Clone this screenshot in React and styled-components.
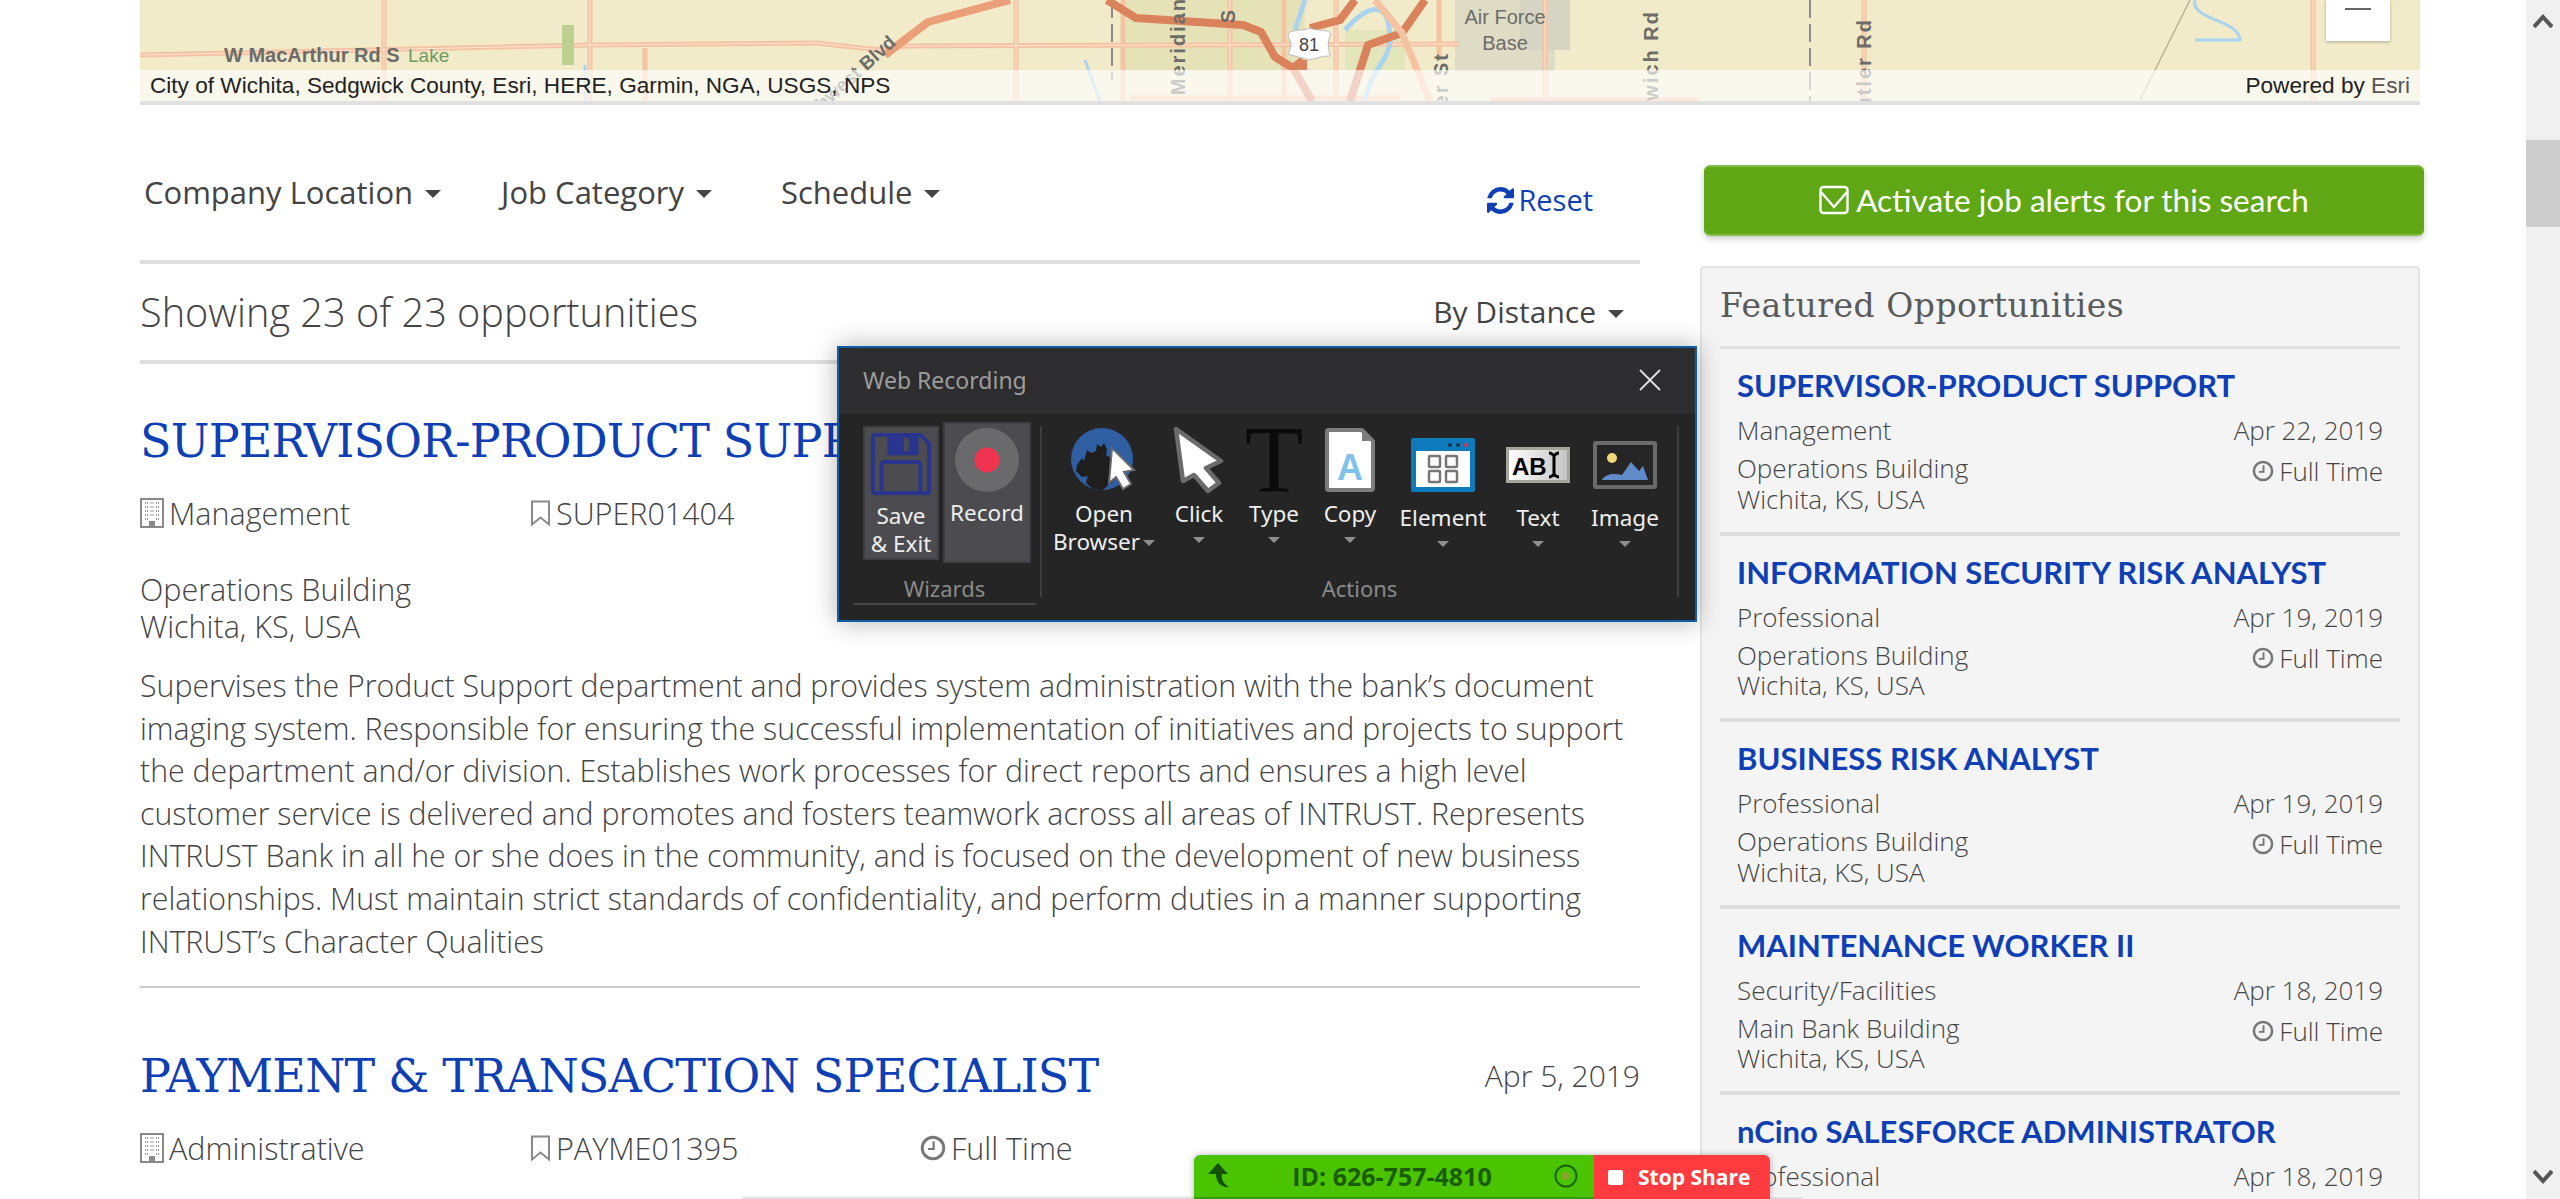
import React from "react";
import styled, { createGlobalStyle } from "styled-components";

const Global = createGlobalStyle`
  html, body { margin: 0; padding: 0; background: #fff; overflow: hidden; }
  * { box-sizing: border-box; }
`;
const BLUE = "#0f3fb5";
const TXT = "#444444";
const BODY = `"Open Sans", "Lato", sans-serif`;
const SLAB = `"DejaVu Serif", "Liberation Serif", serif`;

const Page = styled.div`
  display: flex; width: 2560px; height: 1199px; overflow: hidden; position: relative;
  font-family: ${BODY}; color: ${TXT}; font-weight: 300;
`;
const Main = styled.main`flex: 1; padding: 0 106px 0 140px; min-width: 0; overflow: hidden;`;
const Scrollbar = styled.aside`
  width: 34px; background: #f0f0f0; display: flex; flex-direction: column; align-items: center;
  padding-top: 14px;
`;
const Thumb = styled.div`width: 34px; height: 87px; background: #cdcdcd; margin-top: 112px;`;
const ScrollArrowDown = styled.svg`margin-top: auto; margin-bottom: 15px;`;

const MapBox = styled.div`
  height: 105px; border-bottom: 4px solid #e0e0e0; position: relative; overflow: hidden; background: #f0eac8;
`;
const MapSvg = styled.svg`display: block; width: 100%; height: 101px;`;
const Attribution = styled.div`
  position: absolute; left: 0; right: 0; bottom: 0; height: 31px; padding: 0 10px 0 10px;
  background: rgba(255,255,255,.65); display: flex; justify-content: space-between; align-items: center;
  font: 400 22.6px "Liberation Sans", sans-serif; color: #222;
`;
const EsriLink = styled.span`color: #555;`;
const ZoomBtn = styled.div`
  position: absolute; top: 0; right: 30px; width: 64px; height: 41px; background: #fff;
  box-shadow: 0 1px 3px rgba(0,0,0,.3); display: flex; justify-content: center; padding-top: 8px;
`;
const ZoomMinus = styled.i`width: 26px; height: 2px; background: #666;`;

const Columns = styled.div`display: flex; gap: 64px;`;
const Left = styled.section`width: 1500px; flex: none;`;
const Right = styled.section`width: 724px; flex: none; padding-top: 60px;`;

const FilterBar = styled.div`
  height: 159px; border-bottom: 4px solid #e0e0e0; display: flex; align-items: flex-start; padding: 66px 47px 0 4px;
`;
const Filter = styled.button`
  border: 0; background: none; padding: 0; font: 400 ${p => p.$size || 31}px/42px ${BODY}; color: ${TXT};
  margin-right: ${p => p.$gap || 0}px; display: inline-flex; align-items: center;
`;
const Caret = styled.i`
  display: inline-block; width: 0; height: 0; margin-left: 12px; margin-top: 4px;
  border-left: 8px solid transparent; border-right: 8px solid transparent; border-top: 8px solid ${TXT};
`;
const Reset = styled.a`
  margin-left: auto; margin-top: 8px; display: inline-flex; align-items: center; gap: 4px; color: ${BLUE};
  font: 400 29px/42px ${BODY};
`;
const ResultsHead = styled.div`
  height: 100px; border-bottom: 4px solid #e0e0e0; display: flex; justify-content: space-between;
  align-items: center; padding: 0 16px 0 0; margin-top: 0;
`;
const Showing = styled.h2`margin: 0; font: 300 39.7px/44px ${BODY}; color: ${TXT};`;

const Job = styled.article`
  padding-top: 47px; & + & { margin-top: 11px; }
  &:first-of-type { padding-bottom: 23px; border-bottom: 2px solid #ccc; }
`;
const JobHead = styled.div`display: flex; justify-content: space-between; align-items: center;`;
const JobTitle = styled.h3`
  margin: 0; font: 400 46px/60px ${SLAB}; color: ${BLUE}; white-space: nowrap; letter-spacing: -0.8px;
`;
const JobDate = styled.span`font: 300 30px/60px ${BODY};`;
const Meta = styled.div`display: flex; margin-top: 22px; height: 40px; align-items: center;`;
const MetaItem = styled.span`width: 390px; display: inline-flex; align-items: center; gap: 5px; font: 300 30.5px/40px ${BODY}; white-space: nowrap;`;
const Location = styled.div`margin-top: 38px; font: 300 30.5px/37px ${BODY};`;
const Line = styled.span`display: block; white-space: nowrap;`;
const Desc = styled.p`margin: 20px 0 0; font: 300 30.3px/42.6px ${BODY};`;

const AlertBtn = styled.button`
  width: 720px; height: 71px; margin-left: 0; border: 0; border-radius: 6px; background: #5fa714;
  border-top: 2px solid #85bd4d; border-bottom: 2px solid #85bd4d;
  box-shadow: 0 3px 6px rgba(0,0,0,.2); color: #fff; font: 400 31.5px "Lato", sans-serif;
  display: flex; align-items: center; justify-content: center; gap: 7px; padding-bottom: 2px;
`;
const Panel = styled.div`
  width: 720px; margin: 30px 0 0 -4px; background: #f4f4f4; border: 2px solid #e4e4e4; border-radius: 4px;
  padding: 0 18px; height: 1000px;
`;
const PanelTitle = styled.h2`
  margin: 0; height: 81px; display: flex; align-items: center; padding-bottom: 4px; border-bottom: 3px solid #e0e0e0;
  font: 400 33px ${SLAB}; color: #5a5a5a; letter-spacing: .5px;
`;
const Item = styled.div`
  height: 186.5px; padding: 20px 17px 0; border-bottom: 4px solid #ddd;
`;
const ItemTitle = styled.a`display: block; font: 700 31px/32px "Lato", sans-serif; color: ${BLUE}; white-space: nowrap;`;
const ItemRow = styled.div`display: flex; justify-content: space-between; align-items: ${p => p.$top ? "flex-start" : "center"}; font: 300 26px/32px ${BODY}; margin-top: ${p => p.$mt}px;`;
const ItemPlace = styled.div`font: 300 26px/30.5px ${BODY};`;
const ItemTime = styled.span`display: inline-flex; align-items: center; gap: 5px; margin-top: 2px;`;

const Recorder = styled.div`
  position: absolute; left: 837px; top: 346px; width: 860px; height: 276px; border: 2px solid #0e5ea8;
  background: #252526; box-shadow: 0 0 24px rgba(0,0,0,.3); color: #e8e8e8; font-family: "Noto Sans", sans-serif; font-weight: 400;
`;
const RecHead = styled.div`
  height: 66px; background: #2d2d30; display: flex; align-items: center; justify-content: space-between;
  padding: 0 34px 2px 24px; font-size: 23px; color: #9c9c9c;
`;
const Ribbon = styled.div`display: flex; height: 206px;`;
const Group = styled.div`width: ${p => p.$w}px; padding-top: ${p => p.$pt}px; display: flex; flex-direction: column;`;
const GroupRow = styled.div`display: flex; height: ${p => p.$h}px;`;
const GroupLabel = styled.div`
  margin: ${p => p.$mt}px ${p => p.$line ? 4 : 0}px 0 ${p => p.$line ? 14 : 0}px; text-align: center; font-size: 22px; line-height: 29px; color: #8a8a8a;
  height: 31px; border-bottom: ${p => p.$line ? "2px solid #454548" : "0"};
`;
const Sep = styled.i`width: 2px; height: 171px; margin-top: 12px; background: #3e3e42; flex: none;`;
const WizBtn = styled.div`
  width: ${p => p.$w}px; height: ${p => p.$h}px; margin: ${p => p.$mt}px 0 0 ${p => p.$ml}px; background: #4b4b50;
  border: 2px solid #3f3f43; display: flex; flex-direction: column; align-items: center; padding-top: ${p => p.$pt}px;
  font-size: 22.5px; line-height: 28px; text-align: center; color: #eee;
`;
const WizLabel = styled.span`margin-top: 6px;`;
const Tool = styled.div`
  width: ${p => p.$w}px; flex: none; display: flex; flex-direction: column; align-items: center;
  font-size: 22.5px; line-height: 28px; text-align: center; color: #eee;
`;
const IconSlot = styled.div`
  height: ${p => p.$low ? 78 : 68}px; display: flex; align-items: center; justify-content: center; margin-bottom: ${p => p.$low ? 0 : 6}px;
`;
const DropCaret = styled.i`
  display: inline-block; width: 0; height: 0; margin: ${p => p.$inline ? "0 0 4px 3px" : "9px 0 0"};
  border-left: 6.5px solid transparent; border-right: 6.5px solid transparent; border-top: 6.5px solid #8e8e8e;
`;
const BigT = styled.span`font: 400 96px/68px "Liberation Serif", serif; color: #0b0b0b;`;

const ShareBar = styled.div`
  position: absolute; left: 1194px; top: 1155px; width: 576px; height: 44px; display: flex; border-radius: 6px 6px 0 0;
  overflow: hidden; font: 700 21px "Open Sans", sans-serif; box-shadow: 0 0 6px rgba(0,0,0,.3);
`;
const ShareId = styled.div`
  width: 400px; background: #4bc400; border-bottom: 2px solid #3a9a00; color: #1a5c00; display: flex; align-items: center; padding: 0 16px 0 12px; justify-content: space-between;
  font-size: 25px;
`;
const ShareStop = styled.div`flex: 1; background: #ff3b3f; color: #fff; display: flex; align-items: center; gap: 15px; padding-left: 14px;`;
const StopSquare = styled.i`width: 15px; height: 15px; border-radius: 2px; background: #fff;`;
const WinShadow = styled.div`
  position: absolute; left: 742px; top: 1195px; width: 1060px; height: 4px; background: linear-gradient(#fff, #d8d8d8);
`;

const Building = () => (
  <svg width="24" height="30" viewBox="0 0 24 30">
    <rect x="1" y="1" width="22" height="28" fill="#fff" stroke="#8a8a8a" strokeWidth="2" />
    <path d="M5 5h3M10.5 5h3M16 5h3M5 9h3M10.5 9h3M16 9h3M5 13h3M10.5 13h3M16 13h3M5 17h3M10.5 17h3M16 17h3M5 21h3M16 21h3" stroke="#9a9a9a" strokeWidth="2" strokeDasharray="1 1" />
    <rect x="9" y="23" width="6" height="6" fill="#8a8a8a" />
  </svg>
);
const Bookmark = () => (
  <svg width="21" height="27" viewBox="0 0 21 27" fill="none" stroke="#8a8a8a" strokeWidth="2">
    <path d="M2 1.5h17v23l-8.5-7-8.5 7z" />
  </svg>
);
const Clock = ({ s = 26 }) => (
  <svg width={s} height={s} viewBox="0 0 21 21" fill="none" stroke="#777" strokeWidth="2.4">
    <circle cx="10.5" cy="10.5" r="8.7" />
    <path d="M11 5v6.3H6.5" strokeWidth="1.8" />
  </svg>
);
const Refresh = () => (
  <svg width="27" height="27" viewBox="0 0 1536 1536" fill={BLUE}>
    <path d="M1511 928q0 5-1 7-64 268-268 434.5T764 1536q-146 0-282.500-55T238 1324l-129 129q-19 19-45 19t-45-19-19-45V960q0-26 19-45t45-19h448q26 0 45 19t19 45-19 45l-137 137q71 66 161 102t187 36q134 0 250-65t186-179q11-17 53-117 8-23 30-23h192q13 0 22.500 9.500t9.500 22.500zm25-800v448q0 26-19 45t-45 19h-448q-26 0-45-19t-19-45 19-45l138-138Q969 256 768 256q-134 0-250 65T332 500q-11 17-53 117-8 23-30 23H50q-13 0-22.500-9.500T18 608v-7q65-268 270-434.500T768 0q146 0 284 55.500T1297 212l130-129q19-19 45-19t45 19 19 45z" />
  </svg>
);
const Envelope = () => (
  <svg width="30" height="30" viewBox="0 0 30 30" fill="none" stroke="#fff" strokeWidth="2.4">
    <rect x="1.500" y="2" width="27" height="26" rx="3" />
    <path d="M2 7l13 15L28 7" />
  </svg>
);

const Floppy = () => (
  <svg width="64" height="66" viewBox="0 0 64 66" fill="none" stroke="#29348f" strokeWidth="4">
    <path d="M3 5a2 2 0 0 1 2-2h47l9 9v49a2 2 0 0 1-2 2H5a2 2 0 0 1-2-2z" />
    <rect x="18" y="3" width="32" height="21" fill="#29348f" stroke="none" />
    <rect x="35" y="6" width="5" height="14" fill="#4b4b50" stroke="none" />
    <path d="M12 62V34a3 3 0 0 1 3-3h34a3 3 0 0 1 3 3v28" />
  </svg>
);
const RecDot = () => (
  <svg width="66" height="66" viewBox="0 0 66 66">
    <circle cx="33" cy="33" r="32" fill="#6a6a6c" />
    <circle cx="33" cy="33" r="12.500" fill="#f0344f" />
  </svg>
);
const Globe = () => (
  <svg width="66" height="66" viewBox="0 0 66 66">
    <circle cx="31" cy="32" r="31" fill="#2f5ea3" />
    <path d="M6 38l5-7 2 3 3-11 4 3 5-2 1-7 4 3 3-4 3 6-1 6 5 3 5 1 4 6v9l-9 9c-3 1-6 7-10 7-6 0-13-3-15-8l2-6-6 1-6-6z" fill="#1e1e1e" />
    <polygon points="41,21 63,43 53,45 60,57 52,62 45,50 38,56" fill="#fff" stroke="#6a6a6a" strokeWidth="2" />
  </svg>
);
const Cursor = () => (
  <svg width="52" height="68" viewBox="-3 -3 52 68">
    <polygon points="0,0 45,32 30,39 43,54 32,62 18,46 7,52" fill="#fff" stroke="#6b6b6b" strokeWidth="4.500" strokeLinejoin="round" />
  </svg>
);
const CopyDoc = () => (
  <svg width="50" height="64" viewBox="0 0 50 64">
    <path d="M2 4a2 2 0 0 1 2-2h33l11 11v47a2 2 0 0 1-2 2H4a2 2 0 0 1-2-2z" fill="#fff" stroke="#7c7c7c" strokeWidth="4" />
    <path d="M37 2l11 11H37z" fill="#7c7c7c" />
    <text x="25" y="52" textAnchor="middle" fontFamily="Liberation Sans" fontWeight="700" fontSize="36" fill="#7fc1ea">A</text>
  </svg>
);
const ElementIcon = () => (
  <svg width="64" height="54" viewBox="0 0 64 54">
    <rect width="64" height="54" rx="2" fill="#0f7bbd" />
    <rect x="5" y="13" width="54" height="36" fill="#fff" />
    <circle cx="39" cy="7" r="2" fill="#1c3550" /><circle cx="47" cy="7" r="2" fill="#1c3550" /><circle cx="55" cy="7" r="2" fill="#e5304a" />
    <g fill="none" stroke="#777" strokeWidth="2.500">
      <rect x="18" y="18" width="11" height="11" rx="1" /><rect x="35" y="18" width="11" height="11" rx="1" />
      <rect x="18" y="33" width="11" height="11" rx="1" /><rect x="35" y="33" width="11" height="11" rx="1" />
    </g>
  </svg>
);
const TextIcon = () => (
  <svg width="64" height="36" viewBox="0 0 64 36">
    <defs>
      <linearGradient id="abg" x1="0" x2="1"><stop offset="0" stopColor="#fff" /><stop offset="1" stopColor="#c4c4c4" /></linearGradient>
    </defs>
    <rect x="1.500" y="1.500" width="61" height="33" fill="url(#abg)" stroke="#a5a59c" strokeWidth="3" />
    <text x="6" y="28" fontFamily="Liberation Sans" fontWeight="700" fontSize="24" fill="#000">AB</text>
    <path d="M43 6c3 0 3 2 5 2s2-2 5-2M48 8v20M43 30c3 0 3-2 5-2s2 2 5 2" fill="none" stroke="#000" strokeWidth="3" />
  </svg>
);
const ImageIcon = () => (
  <svg width="64" height="48" viewBox="0 0 64 48">
    <rect x="2" y="2" width="60" height="44" rx="1" fill="#262626" stroke="#6b6b6b" strokeWidth="4" />
    <circle cx="19" cy="17" r="5" fill="#f1d97b" />
    <path d="M9 39c3-6 12-7 20-5l9-13 8 9 4-5 5 14z" fill="#5f8cc9" />
  </svg>
);

const ROAD = "#f6c3a2";
const HWY = "#d9825c";
const MapArt = () => (
  <MapSvg viewBox="140 0 2280 101" preserveAspectRatio="none">
    <rect x="140" y="0" width="2280" height="101" fill="#f1ebca" />
    <rect x="1125" y="0" width="180" height="70" fill="#e6e2b8" />
    <rect x="1345" y="30" width="60" height="40" fill="#e3e6ba" />
    <rect x="1455" y="0" width="100" height="72" fill="#dfdcc6" />
    <rect x="1520" y="0" width="50" height="50" fill="#d6d4c2" />
    <g fill="none" stroke={ROAD} strokeWidth="5">
      <path d="M140 55L592 45 816 43 880 50 905 46 1460 44" />
      <path d="M384 0V101M590 0V101M645 48V101M1016 0V101M1123 0V101M1230 0V101M1284 0V101M1336 0V101M1439 0V60M1545 0V101M1864 0V101M2313 0V101" />
      <path d="M1130 98H1400M1490 100H1700" />
    </g>
    <path d="M140 55L592 45 816 43 880 50 905 46 1460 44M384 0V101M590 0V101M1016 0V101M1230 0V101M1336 0V101M1545 0V101M1864 0V101M2313 0V101" fill="none" stroke="#fbe6d6" strokeWidth="1" />
    <g fill="none" stroke="#a9d3ee" strokeWidth="5">
      <path d="M1305 0L1295 30M1345 30C1370 2 1390 0 1390 40C1390 60 1370 70 1365 101" />
      <path d="M2195 0C2190 20 2240 20 2240 40H2195" strokeWidth="3" />
      <path d="M585 65V101M1085 60L1100 101" strokeWidth="3" />
    </g>
    <rect x="562" y="25" width="12" height="40" fill="#bcd08f" />
    <path d="M1112 0V80M1810 0V101" stroke="#8c8c8c" strokeWidth="2" strokeDasharray="18 6" fill="none" />
    <path d="M2190 0L2140 100" stroke="#b8b296" strokeWidth="1.500" fill="none" />
    <g fill="none" stroke={HWY} strokeLinejoin="round">
      <path d="M885 55L928 22 1010 0" stroke="#eb9f78" strokeWidth="8" />
      <path d="M1107 0L1136 18 1243 25 1261 32 1275 57 1293 68 1303 60" strokeWidth="8" />
      <path d="M1293 68L1312 101M1303 60V70" strokeWidth="8" />
      <path d="M1310 28L1340 20 1355 0" strokeWidth="8" />
      <path d="M1350 101L1368 45 1402 33 1425 0" strokeWidth="8" />
      <path d="M1375 0L1402 33 1430 101" stroke={ROAD} strokeWidth="7" />
    </g>
    <path d="M1288 36C1288 28 1302 32 1310 28C1318 32 1332 28 1330 36C1326 46 1330 52 1330 56C1322 56 1316 58 1310 60C1302 58 1294 56 1288 54C1292 46 1292 44 1288 36Z" fill="#fff" stroke="#bbb" />
    <text x="1309" y="51" textAnchor="middle" fontFamily="Liberation Sans" fontSize="18" fill="#444">81</text>
    <g fontFamily="Liberation Sans" fontSize="20" fill="#6c6c68">
      <text x="224" y="62" fontWeight="700">W MacArthur Rd S</text>
      <text x="408" y="62" fill="#6f9a60" fontSize="19">Lake</text>
      <text x="1505" y="24" textAnchor="middle">Air Force</text>
      <text x="1505" y="50" textAnchor="middle">Base</text>
      <text transform="translate(897 44) rotate(-42)" textAnchor="end" fontWeight="700" fontSize="19">Southwest Blvd</text>
      <text transform="translate(1185 -3) rotate(-90)" textAnchor="end" fontWeight="700" letterSpacing="2">S Meridian</text>
      <text transform="translate(1235 10) rotate(-90)" textAnchor="end" fontWeight="700">S</text>
      <text transform="translate(1448 52) rotate(-90)" textAnchor="end" fontWeight="700" letterSpacing="2">Oliver St</text>
      <text transform="translate(1658 10) rotate(-90)" textAnchor="end" fontWeight="700" letterSpacing="2">Greenwich Rd</text>
      <text transform="translate(1871 18) rotate(-90)" textAnchor="end" fontWeight="700" letterSpacing="2">Butler Rd</text>
    </g>
  </MapSvg>
);

const featured = [
  ["SUPERVISOR-PRODUCT SUPPORT", "Management", "Apr 22, 2019", "Operations Building"],
  ["INFORMATION SECURITY RISK ANALYST", "Professional", "Apr 19, 2019", "Operations Building"],
  ["BUSINESS RISK ANALYST", "Professional", "Apr 19, 2019", "Operations Building"],
  ["MAINTENANCE WORKER II", "Security/Facilities", "Apr 18, 2019", "Main Bank Building"],
  ["nCino SALESFORCE ADMINISTRATOR", "Professional", "Apr 18, 2019", "Operations Building"],
];
const descLines = [
  "Supervises the Product Support department and provides system administration with the bank’s document",
  "imaging system. Responsible for ensuring the successful implementation of initiatives and projects to support",
  "the department and/or division. Establishes work processes for direct reports and ensures a high level",
  "customer service is delivered and promotes and fosters teamwork across all areas of INTRUST. Represents",
  "INTRUST Bank in all he or she does in the community, and is focused on the development of new business",
  "relationships. Must maintain strict standards of confidentiality, and perform duties in a manner supporting",
  "INTRUST’s Character Qualities",
];
const tools = [
  { w: 124, icon: <Globe />, label: <>Open<br />Browser<DropCaret $inline /></> },
  { w: 66, icon: <Cursor />, label: "Click", caret: true },
  { w: 84, icon: <BigT>T</BigT>, label: "Type", caret: true },
  { w: 68, icon: <CopyDoc />, label: "Copy", caret: true },
  { w: 118, low: true, icon: <ElementIcon />, label: "Element", caret: true },
  { w: 72, low: true, icon: <TextIcon />, label: "Text", caret: true },
  { w: 102, low: true, icon: <ImageIcon />, label: "Image", caret: true },
];

export default function App() {
  return (
    <Page>
      <Global />
      <Main>
        <MapBox>
          <MapArt />
          <ZoomBtn><ZoomMinus /></ZoomBtn>
          <Attribution>
            <span>City of Wichita, Sedgwick County, Esri, HERE, Garmin, NGA, USGS, NPS</span>
            <span>Powered by <EsriLink>Esri</EsriLink></span>
          </Attribution>
        </MapBox>
        <Columns>
          <Left>
            <FilterBar>
              <Filter $gap={60}>Company Location<Caret /></Filter>
              <Filter $gap={69}>Job Category<Caret /></Filter>
              <Filter>Schedule<Caret /></Filter>
              <Reset><Refresh />Reset</Reset>
            </FilterBar>
            <ResultsHead>
              <Showing>Showing 23 of 23 opportunities</Showing>
              <Filter $size={30}>By Distance<Caret /></Filter>
            </ResultsHead>
            <Job>
              <JobHead><JobTitle>SUPERVISOR-PRODUCT SUPPORT</JobTitle></JobHead>
              <Meta>
                <MetaItem><Building />Management</MetaItem>
                <MetaItem><Bookmark />SUPER01404</MetaItem>
              </Meta>
              <Location><Line>Operations Building</Line><Line>Wichita, KS, USA</Line></Location>
              <Desc>{descLines.map(l => <Line key={l}>{l}</Line>)}</Desc>
            </Job>
            <Job>
              <JobHead><JobTitle>PAYMENT &amp; TRANSACTION SPECIALIST</JobTitle><JobDate>Apr 5, 2019</JobDate></JobHead>
              <Meta>
                <MetaItem><Building />Administrative</MetaItem>
                <MetaItem><Bookmark />PAYME01395</MetaItem>
                <MetaItem><Clock />Full Time</MetaItem>
              </Meta>
            </Job>
          </Left>
          <Right>
            <AlertBtn><Envelope />Activate job alerts for this search</AlertBtn>
            <Panel>
              <PanelTitle>Featured Opportunities</PanelTitle>
              {featured.map(([t, c, d, b]) => (
                <Item key={t}>
                  <ItemTitle>{t}</ItemTitle>
                  <ItemRow $mt={13}><span>{c}</span><span>{d}</span></ItemRow>
                  <ItemRow $mt={7} $top>
                    <ItemPlace><Line>{b}</Line><Line>Wichita, KS, USA</Line></ItemPlace>
                    <ItemTime><Clock s={22} />Full Time</ItemTime>
                  </ItemRow>
                </Item>
              ))}
            </Panel>
          </Right>
        </Columns>
      </Main>
      <Scrollbar>
        <svg width="20" height="14" viewBox="0 0 20 14"><path d="M1 13L10 3l9 10" fill="none" stroke="#555" strokeWidth="4" /></svg>
        <Thumb />
        <ScrollArrowDown width="20" height="14" viewBox="0 0 20 14"><path d="M1 1l9 10 9-10" fill="none" stroke="#555" strokeWidth="4" /></ScrollArrowDown>
      </Scrollbar>

      <Recorder>
        <RecHead>
          <span>Web Recording</span>
          <svg width="22" height="22" viewBox="0 0 22 22" stroke="#e0e0e0" strokeWidth="1.800"><path d="M1 1l20 20M21 1L1 21" /></svg>
        </RecHead>
        <Ribbon>
          <Group $w={201} $pt={8}>
            <GroupRow $h={141}>
              <WizBtn $w={76} $h={134} $mt={4} $ml={24} $pt={4}><Floppy /><WizLabel>Save<br />&amp; Exit</WizLabel></WizBtn>
              <WizBtn $w={88} $h={141} $mt={0} $ml={4} $pt={3}><RecDot /><WizLabel>Record</WizLabel></WizBtn>
            </GroupRow>
            <GroupLabel $mt={11} $line>Wizards</GroupLabel>
          </Group>
          <Sep />
          <Group $w={635} $pt={12}>
            <GroupRow $h={137}>
              {tools.map(t => (
                <Tool key={t.w} $w={t.w}>
                  <IconSlot $low={t.low}>{t.icon}</IconSlot>
                  <span>{t.label}</span>
                  {t.caret && <DropCaret />}
                </Tool>
              ))}
            </GroupRow>
            <GroupLabel $mt={11}>Actions</GroupLabel>
          </Group>
          <Sep />
        </Ribbon>
      </Recorder>

      <WinShadow />
      <ShareBar>
        <ShareId>
          <svg width="24" height="28" viewBox="0 0 24 28"><path d="M12 1L22 12h-6c-1 6 2 10 7 13-6 1-13-3-13-13H2z" fill="#155200" /></svg>
          <span>ID: 626-757-4810</span>
          <svg width="24" height="24" viewBox="0 0 24 24"><circle cx="12" cy="12" r="10.500" fill="none" stroke="#1a6400" strokeWidth="2" /><circle cx="12" cy="12" r="4" fill="#8aa32a" /></svg>
        </ShareId>
        <ShareStop><StopSquare />Stop Share</ShareStop>
      </ShareBar>
    </Page>
  );
}
